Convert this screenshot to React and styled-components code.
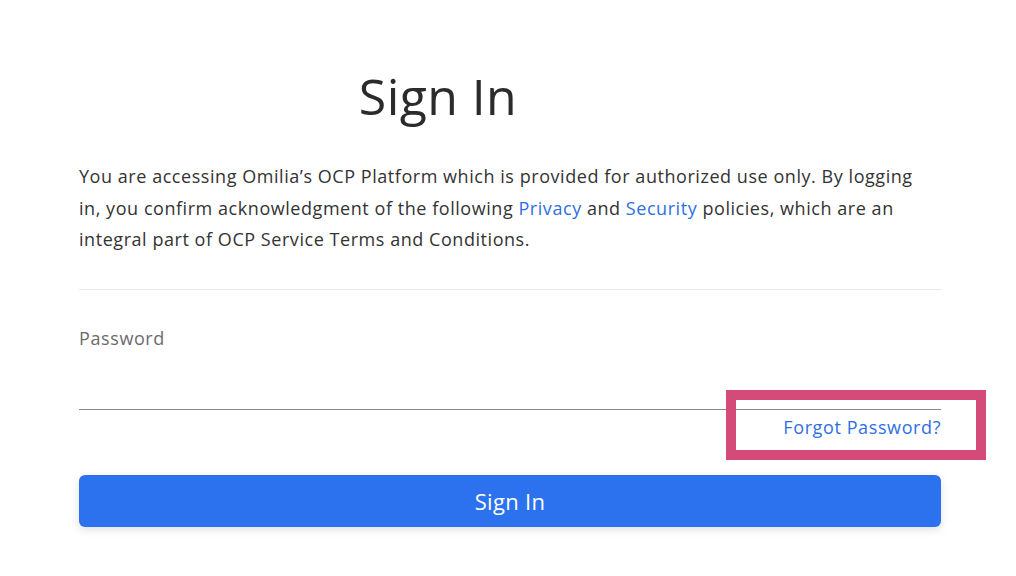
import styled, { createGlobalStyle } from 'styled-components';

const GlobalStyle = createGlobalStyle`
    html, body {
        margin: 0;
        padding: 0;
        background: #ffffff;
    }
    body {
        font-family: "Open Sans", "Noto Sans", sans-serif;
    }
`;

const Page = styled.div`
    width: 1016px;
    height: 576px;
    background: #ffffff;
    overflow: hidden;
`;

const Form = styled.div`
    width: 862px;
    padding: 62px 0 0 79px;
    display: flex;
    flex-direction: column;
`;

const Title = styled.h1`
    margin: 0;
    padding-right: 144px;
    text-align: center;
    font-size: 50px;
    line-height: 68px;
    font-weight: 400;
    letter-spacing: 0.4px;
    color: #2b2b2b;
`;

const Notice = styled.p`
    margin: 31px 0 0;
    font-size: 18px;
    line-height: 31.5px;
    letter-spacing: 0.55px;
    white-space: nowrap;
    color: #333333;
`;

const Link = styled.a`
    color: #2f6fe4;
    text-decoration: none;
    cursor: pointer;
`;

const Divider = styled.hr`
    margin: 33px 0 0;
    border: none;
    border-top: 1px solid #ececec;
`;

const Label = styled.label`
    margin-top: 35px;
    font-size: 18px;
    line-height: 27px;
    letter-spacing: 0.6px;
    color: #6b6b6b;
`;

const Input = styled.input`
    height: 57px;
    padding: 0;
    border: none;
    border-bottom: 1px solid #8a8a8a;
    outline: none;
    font-family: inherit;
    font-size: 18px;
    background: transparent;
`;

const ForgotRow = styled.div`
    position: relative;
    display: flex;
    justify-content: flex-end;
    margin-top: 4px;
    font-size: 18px;
    line-height: 27px;
    letter-spacing: 0.6px;
`;

const Highlight = styled.div`
    position: absolute;
    left: 647px;
    top: -24px;
    width: 240px;
    height: 50px;
    border: 10px solid #d44b7a;
    pointer-events: none;
`;

const Button = styled.button`
    margin-top: 34px;
    height: 52px;
    border: none;
    border-radius: 6px;
    background: #2c71ee;
    color: #ffffff;
    font-family: inherit;
    font-size: 22px;
    letter-spacing: 0.3px;
    box-shadow: 0 3px 8px rgba(0, 0, 0, 0.12);
    cursor: pointer;
`;

const App = () => {
    return (
        <Page>
            <GlobalStyle />
            <Form>
                <Title>Sign In</Title>
                <Notice>
                    You are accessing Omilia’s OCP Platform which is provided for authorized use only. By logging
                    <br />
                    in, you confirm acknowledgment of the following <Link>Privacy</Link> and <Link>Security</Link> policies, which are an
                    <br />
                    integral part of OCP Service Terms and Conditions.
                </Notice>
                <Divider />
                <Label>Password</Label>
                <Input type="password" />
                <ForgotRow>
                    <Link>Forgot Password?</Link>
                    <Highlight />
                </ForgotRow>
                <Button>Sign In</Button>
            </Form>
        </Page>
    );
};

export default App;
